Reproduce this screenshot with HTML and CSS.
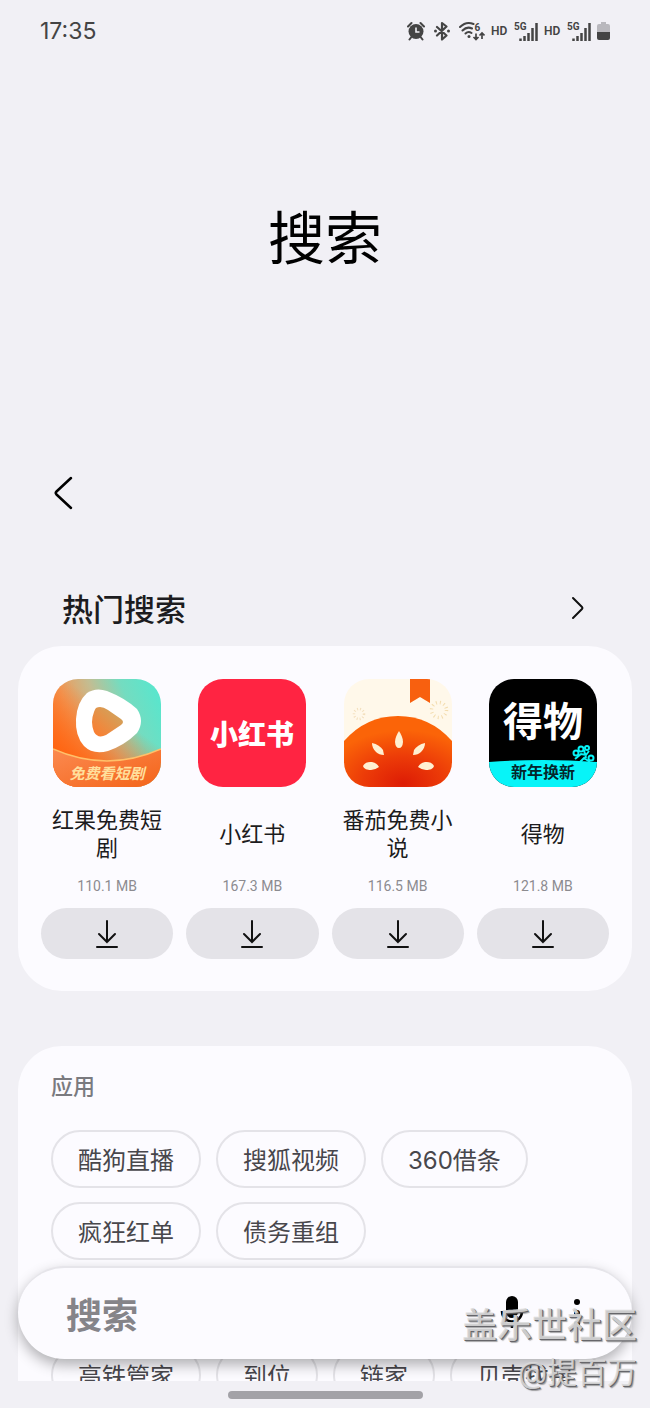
FILE: index.html
```html
<!DOCTYPE html>
<html lang="zh-CN">
<head>
  <meta charset="UTF-8">
  <meta name="viewport" content="width=device-width, initial-scale=1.0">
  <title>搜索</title>
  <link rel="stylesheet" href="styles.css">
</head>
<body>
  <div class="screen">
    <div class="scroll">

      <div class="status-bar">
        <span class="clock">17:35</span>
        <div class="status-icons">
          <!-- alarm -->
          <svg width="20" height="20" viewBox="0 0 20 20">
            <circle cx="9" cy="10.500" r="7.500" fill="#444"/>
            <path d="M1 5.500L4.500 2M17 5.500L13.500 2M4 16.500l-1.500 2M14 16.500l1.500 2" stroke="#444" stroke-width="2" stroke-linecap="round"/>
            <path d="M9 6.500v4.500h3.500" fill="none" stroke="#f1f0f5" stroke-width="1.600"/>
          </svg>
          <!-- bluetooth -->
          <svg width="20" height="20" viewBox="0 0 20 20">
            <path d="M4 6l9.500 8.500-4.500 4V2l4.500 3.500L4 14.500" fill="none" stroke="#444" stroke-width="2.200" stroke-linejoin="round" stroke-linecap="round"/>
            <circle cx="2.500" cy="10" r="1.500" fill="#444"/>
            <circle cx="15.500" cy="10" r="1.500" fill="#444"/>
          </svg>
          <!-- wifi 6 -->
          <svg width="26" height="20" viewBox="0 0 26 20">
            <path d="M1 6C5 2 10 1 14.500 3M3.500 9.500C6.500 6.500 10 6 13 7.500M6.500 12.500c2-2 4-2 6-.5" fill="none" stroke="#444" stroke-width="2" stroke-linecap="round"/>
            <circle cx="10" cy="15.500" r="1.500" fill="#444"/>
            <path d="M17 12.500v6M14.500 16l2.500 2.500 2.500-2.500M23 18v-6M20.500 14.500L23 12l2.500 2.500" fill="none" stroke="#444" stroke-width="1.700"/>
            <text class="tiny" x="15.500" y="9.500">6</text>
          </svg>
          <span class="hd">HD</span>
          <svg width="24" height="20" viewBox="0 0 24 20">
            <path d="M6.500 20v-2.500M10.500 20v-5M14.500 20v-8M18.500 20V7M22.500 20V2" stroke="#444" stroke-width="2.500"/>
            <text class="tiny" x="0" y="8.500">5G</text>
          </svg>
          <span class="hd">HD</span>
          <svg width="24" height="20" viewBox="0 0 24 20">
            <path d="M6.500 20v-2.500M10.500 20v-5M14.500 20v-8M18.500 20V7M22.500 20V2" stroke="#444" stroke-width="2.500"/>
            <text class="tiny" x="0" y="8.500">5G</text>
          </svg>
          <!-- battery -->
          <svg width="13" height="20" viewBox="0 0 13 20">
            <path d="M4 1h5v2h2q2 0 2 2v6H0V5q0-2 2-2h2z" fill="#b9b8bd"/>
            <path d="M0 11h13v6q0 2-2 2H2q-2 0-2-2z" fill="#444"/>
          </svg>
        </div>
      </div>

      <header class="hero">
        <h1>搜索</h1>
      </header>

      <div class="toolbar">
        <button class="icon-btn" type="button" aria-label="返回">
          <svg width="20" height="34" viewBox="0 0 20 34">
            <path d="M18 2L3.500 15.500q-1.500 1.500 0 3L18 32" fill="none" stroke="#000" stroke-width="2.500" stroke-linecap="round"/>
          </svg>
        </button>
      </div>

      <div class="section-head">
        <h2>热门搜索</h2>
        <button class="icon-btn" type="button" aria-label="更多">
          <svg width="14" height="24" viewBox="0 0 14 24">
            <path d="M2 2l9 9q1 1 0 2l-9 9" fill="none" stroke="#111" stroke-width="2" stroke-linecap="round"/>
          </svg>
        </button>
      </div>

      <section class="card hot">
        <div class="app">
          <svg class="app-icon" viewBox="0 0 108 108">
            <defs>
              <linearGradient id="hg" x1="0" y1=".65" x2="1" y2=".25">
                <stop offset="0" stop-color="#ff7a2a"/>
                <stop offset=".25" stop-color="#f09a58"/>
                <stop offset=".5" stop-color="#c3bd92"/>
                <stop offset=".75" stop-color="#74dcc0"/>
                <stop offset="1" stop-color="#5be5cc"/>
              </linearGradient>
              <linearGradient id="hw" x1=".7" y1=".1" x2=".2" y2=".8">
                <stop offset=".3" stop-color="#ff6a18" stop-opacity="0"/>
                <stop offset="1" stop-color="#ff6412"/>
              </linearGradient>
              <linearGradient id="hp" x1="0" y1="1" x2="1" y2="0">
                <stop offset="0" stop-color="#ff7a2c"/>
                <stop offset="1" stop-color="#c8ab66"/>
              </linearGradient>
              <linearGradient id="hb" x1="0" y1="0" x2="1" y2="1">
                <stop offset="0" stop-color="#fb8a50"/>
                <stop offset="1" stop-color="#f4641a"/>
              </linearGradient>
            </defs>
            <rect width="108" height="108" fill="url(#hg)"/>
            <rect width="108" height="108" fill="url(#hw)"/>
            <path d="M0 70q54 24 108 0v38H0z" fill="url(#hb)"/>
            <path d="M0 70q54 24 108 0" fill="none" stroke="#ffc06a" stroke-width="1.500"/>
            <path d="M34 14q9-6 20-2 18 7 30 18 8 12 0 24-12 12-29 18-15 4-24-5-9-10-8-27 1-17 11-26z" fill="#fff"/>
            <path d="M43 29q5-3 12 2l13 9q4 3 0 6l-15 10q-8 4-12-3-4-10 0-20 1-3 2-4z" fill="url(#hp)"/>
            <text class="logo-honguo" x="54" y="100" text-anchor="middle">免费看短剧</text>
          </svg>
          <p class="app-name">红果免费短剧</p>
          <span class="app-size">110.1 MB</span>
          <button class="download" type="button" aria-label="下载红果免费短剧">
            <svg width="22" height="30" viewBox="0 0 22 30"><path d="M11 2v21M3 15l8 8 8-8M1 28h20"/></svg>
          </button>
        </div>

        <div class="app">
          <svg class="app-icon" viewBox="0 0 108 108">
            <rect width="108" height="108" fill="#ff2442"/>
            <text class="logo-red" x="54" y="66" text-anchor="middle">小红书</text>
          </svg>
          <p class="app-name">小红书</p>
          <span class="app-size">167.3 MB</span>
          <button class="download" type="button" aria-label="下载小红书">
            <svg width="22" height="30" viewBox="0 0 22 30"><path d="M11 2v21M3 15l8 8 8-8M1 28h20"/></svg>
          </button>
        </div>

        <div class="app">
          <svg class="app-icon" viewBox="0 0 108 108">
            <defs>
              <radialGradient id="tg" cx=".55" cy=".95" r=".75">
                <stop offset="0" stop-color="#dd1c05"/>
                <stop offset=".5" stop-color="#ec3b08"/>
                <stop offset="1" stop-color="#fb6408"/>
              </radialGradient>
            </defs>
            <rect width="108" height="108" fill="#fff8ea"/>
            <path d="M66 0h20v24l-10-6-10 6z" fill="#f8600f"/>
            <circle cx="95" cy="31" r="7.500" fill="none" stroke="#f3dcae" stroke-width="3.500" stroke-dasharray="1 3"/>
            <circle cx="15" cy="35" r="5" fill="none" stroke="#f3dfbd" stroke-width="2.500" stroke-dasharray="1 2"/>
            <path d="M0 62Q22 37 54 37t54 25v46H0z" fill="url(#tg)"/>
            <g fill="#fff0d2">
              <path d="M55 52c2 3 4 7 4 11q-.5 6-4 6t-4-6c0-4 2-8 4-11z"/>
              <path d="M28 64c5 1 9 4 11 7l1 5q-5 0-8-3c-3-3-4-6-4-9z"/>
              <path d="M81 64c-5 1-9 4-11 7l-1 5q5 0 8-3c3-3 4-6 4-9z"/>
              <path d="M19 87c2-4 6-4 9-4q5 1 7 5-4 3-8 3c-4 0-7-1-8-4z"/>
              <path d="M90 87c-2-4-6-4-9-4q-5 1-7 5 4 3 8 3c4 0 7-1 8-4z"/>
            </g>
          </svg>
          <p class="app-name">番茄免费小说</p>
          <span class="app-size">116.5 MB</span>
          <button class="download" type="button" aria-label="下载番茄免费小说">
            <svg width="22" height="30" viewBox="0 0 22 30"><path d="M11 2v21M3 15l8 8 8-8M1 28h20"/></svg>
          </button>
        </div>

        <div class="app">
          <svg class="app-icon" viewBox="0 0 108 108">
            <rect width="108" height="108" fill="#000"/>
            <path d="M0 83q54-4 108 0v25H0z" fill="#07f4f8"/>
            <g fill="none" stroke="#07f4f8" stroke-width="2">
              <circle cx="87" cy="74" r="2.500"/><circle cx="92" cy="70" r="2.500"/>
              <circle cx="98" cy="69" r="2"/><circle cx="102" cy="79" r="2.500"/>
              <path d="M86 80l6-5 5 1 3-4M90 84l5-5 6 4M94 87l5-3M95 71l2 8"/>
            </g>
            <text class="logo-dewu" x="54" y="57" text-anchor="middle">得物</text>
            <text class="logo-dewu-sub" x="54" y="99" text-anchor="middle">新年换新</text>
          </svg>
          <p class="app-name">得物</p>
          <span class="app-size">121.8 MB</span>
          <button class="download" type="button" aria-label="下载得物">
            <svg width="22" height="30" viewBox="0 0 22 30"><path d="M11 2v21M3 15l8 8 8-8M1 28h20"/></svg>
          </button>
        </div>
      </section>

      <section class="card apps">
        <h3>应用</h3>
        <div class="chips">
          <button class="chip" type="button">酷狗直播</button>
          <button class="chip" type="button">搜狐视频</button>
          <button class="chip" type="button">360借条</button>
          <button class="chip" type="button">疯狂红单</button>
          <button class="chip" type="button">债务重组</button>
        </div>
        <div class="chips chips-more">
          <button class="chip" type="button">高铁管家</button>
          <button class="chip" type="button">到位</button>
          <button class="chip" type="button">链家</button>
          <button class="chip" type="button">贝壳找房</button>
        </div>
      </section>

      <form class="search-bar">
        <input type="text" name="q" placeholder="搜索" aria-label="搜索">
        <button class="icon-btn" type="button" aria-label="语音">
          <svg width="24" height="36" viewBox="0 0 24 36">
            <rect x="6" y="0" width="12" height="22" rx="6"/>
            <path d="M2 15c0 14 20 14 20 0M12 26v6" fill="none" stroke="#000" stroke-width="2.500"/>
          </svg>
        </button>
        <button class="icon-btn" type="button" aria-label="更多选项">
          <svg width="24" height="36" viewBox="0 0 24 36">
            <circle cx="12" cy="6" r="3"/><circle cx="12" cy="17" r="3"/><circle cx="12" cy="28" r="3"/>
          </svg>
        </button>
      </form>
    </div>

    <div class="nav-bar"><span class="nav-handle"></span></div>

    <div class="watermark">
      <div class="mark-site">盖乐世社区</div>
      <div class="mark-user">@提百万</div>
    </div>
  </div>
</body>
</html>
```

FILE: styles.css
```css
* {
  margin: 0;
  padding: 0;
  box-sizing: border-box;
}

body {
  background: #f1f0f5;
  color: #1c1c20;
  font-family: Inter, "Noto Sans CJK SC", sans-serif;
}

button,
input {
  border: 0;
  background: none;
  color: inherit;
  font-family: inherit;
}

button {
  cursor: pointer;
}

svg {
  display: block;
}

.screen {
  position: relative;
  display: flex;
  flex-direction: column;
  height: 100vh;
}

.scroll {
  position: relative;
  flex: 1;
  min-height: 0;
  overflow: hidden;
}

/* status bar */
.status-bar {
  display: flex;
  justify-content: space-between;
  align-items: center;
  height: 62px;
  padding: 0 40px;
  color: #444;
}

.clock {
  font-size: 23px;
}

.status-icons {
  display: flex;
  align-items: center;
  gap: 6px;
}

.hd {
  width: 17px;
  font: 600 12px Roboto, sans-serif;
}

.tiny {
  font: bold 10px Roboto, sans-serif;
  fill: #444;
}

/* header */
.hero {
  display: flex;
  align-items: center;
  justify-content: center;
  height: 354px;
}

.hero h1 {
  font-size: 57px;
  font-weight: 400;
  line-height: 80px;
  color: #000;
}

.toolbar {
  display: flex;
  align-items: center;
  height: 154px;
  padding: 0 53px;
}

.section-head {
  display: flex;
  align-items: center;
  justify-content: space-between;
  height: 76px;
  padding: 0 65px 0 62px;
}

.section-head h2 {
  padding-top: 4px;
  font-size: 31px;
  font-weight: 500;
  line-height: 44px;
}

/* cards */
.card {
  margin: 0 18px;
  border-radius: 44px;
  background: #fcfbff;
}

.hot {
  display: grid;
  grid-template-columns: repeat(4, 1fr);
  gap: 13px;
  padding: 33px 23px 32px;
}

.app {
  display: flex;
  flex-direction: column;
  align-items: center;
}

.app-icon {
  width: 108px;
  height: 108px;
  border-radius: 25px;
}

.app-name {
  display: flex;
  align-items: center;
  width: 112px;
  height: 56px;
  margin: 19px 0 14px;
  justify-content: center;
  text-align: center;
  font-size: 22px;
  line-height: 28px;
}

.app-size {
  font: 14px/20px Roboto, sans-serif;
  color: #8c8b90;
}

.download {
  display: flex;
  align-items: center;
  justify-content: center;
  width: 100%;
  height: 51px;
  margin-top: 12px;
  border-radius: 26px;
  background: #e4e3e8;
}

.download path {
  fill: none;
  stroke: #111;
  stroke-width: 2;
  stroke-linecap: round;
}

.logo-honguo {
  font: italic bold 15px "Noto Sans CJK SC", sans-serif;
  fill: #ffdf9c;
}

.logo-red {
  font: 900 28px "Noto Sans CJK SC", sans-serif;
  fill: #fff;
}

.logo-dewu {
  font: bold 40px "Noto Sans CJK SC", sans-serif;
  fill: #fff;
}

.logo-dewu-sub {
  font: bold 16px "Noto Sans CJK SC", sans-serif;
  fill: #04262b;
}

.apps {
  margin-top: 55px;
  padding: 25px 33px;
}

.apps h3 {
  margin-bottom: 29px;
  font-size: 22px;
  font-weight: 500;
  line-height: 30px;
  color: #7a7a7f;
}

.chips {
  display: flex;
  flex-wrap: wrap;
  gap: 14px 15px;
}

/* this row sits under the search bar */
.chips-more {
  flex-wrap: nowrap;
  margin-top: 86px;
}

.chip {
  flex: none;
  height: 58px;
  padding: 4px 25px 0;
  border: 2px solid #e4e3e8;
  border-radius: 29px;
  font-size: 24px;
  line-height: 34px;
  color: #48474c;
}

/* floating search bar */
.search-bar {
  position: absolute;
  left: 18px;
  right: 18px;
  bottom: 22px;
  display: flex;
  align-items: center;
  gap: 41px;
  height: 93px;
  padding: 0 43px 0 48px;
  border-radius: 47px;
  border-top: 2px solid #e6e5ea;
  background: #fcfbff;
  box-shadow: 0 6px 14px rgba(0, 0, 0, 0.3);
}

.search-bar input {
  flex: 1;
  min-width: 0;
  height: 60px;
  padding-top: 5px;
  font-size: 36px;
  font-weight: 700;
  outline: 0;
}

.search-bar input::placeholder {
  color: #858489;
}

/* gesture handle */
.nav-bar {
  display: flex;
  justify-content: center;
  height: 27px;
  padding-top: 10px;
}

.nav-handle {
  width: 30%;
  height: 8px;
  border-radius: 4px;
  background: #a3a2a7;
}

.watermark {
  position: absolute;
  right: 13px;
  bottom: 13px;
  text-align: right;
  color: rgba(218, 218, 218, 0.9);
  text-shadow: 1px 1px 0 #66666a, 2px 2px 1px rgba(80, 80, 80, 0.5);
  pointer-events: none;
}

.mark-site {
  font-size: 35px;
  font-weight: 500;
  line-height: 48px;
}

.mark-user {
  font-size: 30px;
  line-height: 46px;
}
```
